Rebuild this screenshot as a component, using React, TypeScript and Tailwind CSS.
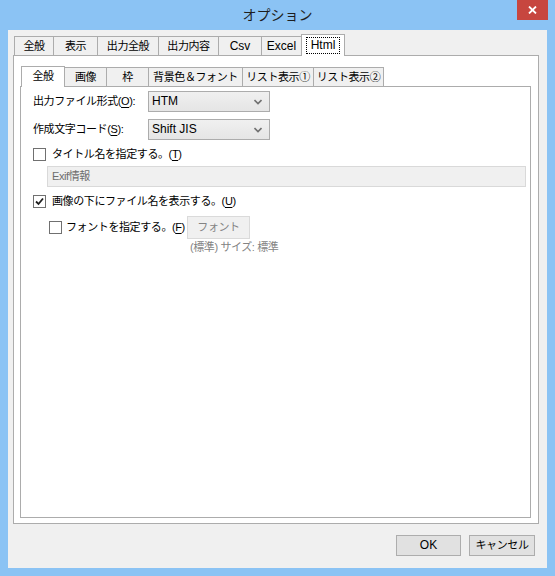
import React from 'react';

const FONT = "font-['Liberation_Sans','Noto_Sans_CJK_JP',sans-serif]";

const OUTER_TABS = [
  { label: '全般', w: 'w-[40px]', latin: false },
  { label: '表示', w: 'w-[45px]', latin: false },
  { label: '出力全般', w: 'w-[62px]', latin: false },
  { label: '出力内容', w: 'w-[61px]', latin: false },
  { label: 'Csv', w: 'w-[44px]', latin: true },
  { label: 'Excel', w: 'w-[41px]', latin: true },
];

const INNER_TABS = [
  { label: '画像', w: 'w-[43px]' },
  { label: '枠', w: 'w-[43px]' },
  { label: '背景色＆フォント', w: 'w-[95px]' },
  { label: 'リスト表示①', w: 'w-[72px]' },
  { label: 'リスト表示②', w: 'w-[71px]' },
];

const Chevron = () => (
  <svg width="8" height="6" viewBox="0 0 8 6" className="shrink-0">
    <path d="M0.5 1 L4 4.5 L7.5 1" fill="none" stroke="#707070" strokeWidth="1.6" />
  </svg>
);

const Select = ({ value }: { value: string }) => (
  <div className="w-[122px] h-[21px] border border-[#acacac] bg-gradient-to-b from-[#f0f0f0] to-[#e5e5e5] flex items-center justify-between pl-[3px] pr-[7px] text-black">
    <span className="text-[12px] tracking-normal">{value}</span>
    <Chevron />
  </div>
);

const Checkbox = ({ checked = false }: { checked?: boolean }) => (
  <div className="w-[13px] h-[13px] border border-[#707070] bg-white flex items-center justify-center shrink-0">
    {checked && (
      <svg width="9" height="9" viewBox="0 0 9 9">
        <path d="M1 4.5 L3.5 7 L8 1.5" fill="none" stroke="#1f1f1f" strokeWidth="1.8" />
      </svg>
    )}
  </div>
);

const Key = ({ k }: { k: string }) => (
  <>
    (<span className="underline underline-offset-[2px]">{k}</span>)
  </>
);

export default function App() {
  return (
    <div className={`w-[555px] h-[576px] bg-[#8bc3f4] flex flex-col text-[11px] leading-[15px] tracking-[-0.4px] font-normal text-black whitespace-nowrap ${FONT}`}>
      {/* title bar */}
      <div className="h-[30px] relative flex items-center justify-center shrink-0">
        <span className="text-[14px] tracking-normal text-[#1e1e1e] pt-[1px]">オプション</span>
        <div className="absolute right-[7px] top-0 w-[31px] h-[20px] bg-[#c7463f] flex items-center justify-center">
          <svg width="9" height="8" viewBox="0 0 9 8">
            <path d="M1 0.5 L8 7.5 M8 0.5 L1 7.5" stroke="white" strokeWidth="1.8" />
          </svg>
        </div>
      </div>

      {/* client area */}
      <div className="mx-[8px] mb-[8px] flex-1 bg-[#f0f0f0] flex flex-col pl-[5px] pt-[4px]">
        {/* outer tabs */}
        <div className="flex items-end h-[21px] pl-[1px]">
          {OUTER_TABS.map((t, i) => (
            <div
              key={t.label}
              className={`${t.w} h-[19px] border border-b-0 border-[#acacac] bg-[#f0f0f0] flex items-center justify-center ${i > 0 ? '-ml-px' : ''} ${t.latin ? 'text-[12px] tracking-normal' : ''}`}
            >
              {t.label}
            </div>
          ))}
          <div className="w-[44px] h-[22px] -ml-px -mb-px relative z-10 border border-b-0 border-[#acacac] bg-white flex items-start justify-center pt-[2px]">
            <span className="border border-dotted border-black px-[4px] leading-[15px] text-[12px] tracking-normal">Html</span>
          </div>
        </div>

        {/* outer panel */}
        <div className="w-[526px] h-[469px] border border-[#acacac] bg-white pl-[6px] pt-[9px]">
          {/* inner tabs */}
          <div className="flex items-end h-[21px] pl-[1px]">
            <div className="w-[44px] h-[21px] -mb-px relative z-10 border border-b-0 border-[#acacac] bg-white flex items-center justify-center pb-[1px]">
              全般
            </div>
            {INNER_TABS.map((t) => (
              <div
                key={t.label}
                className={`${t.w} h-[19px] -ml-px border border-b-0 border-[#acacac] bg-[#f0f0f0] flex items-center justify-center`}
              >
                {t.label}
              </div>
            ))}
          </div>

          {/* inner panel */}
          <div className="w-[511px] h-[432px] border border-[#acacac] bg-white flex flex-col pl-[12px] pt-[4px]">
            <div className="flex items-center h-[21px]">
              <span className="w-[115px]">
                出力ファイル形式<Key k="O" />:
              </span>
              <Select value="HTM" />
            </div>
            <div className="flex items-center h-[21px] mt-[7px]">
              <span className="w-[115px]">
                作成文字コード<Key k="S" />:
              </span>
              <Select value="Shift JIS" />
            </div>
            <div className="flex items-center gap-[6px] h-[17px] mt-[6px]">
              <Checkbox />
              <span>
                タイトル名を指定する。<Key k="T" />
              </span>
            </div>
            <div className="ml-[14px] mr-[4px] mt-[3px] h-[21px] border border-[#d9d9d9] bg-[#f0f0f0] flex items-center pl-[4px] text-[#6d6d6d]">
              Exif情報
            </div>
            <div className="flex items-center gap-[6px] h-[17px] mt-[6px]">
              <Checkbox checked />
              <span>
                画像の下にファイル名を表示する。<Key k="U" />
              </span>
            </div>
            <div className="flex items-center h-[23px] mt-[6px] pl-[16px]">
              <Checkbox />
              <span className="ml-[4px] w-[121px]">
                フォントを指定する。<Key k="F" />
              </span>
              <div className="w-[63px] h-[23px] border border-[#dadada] bg-[#f0f0f0] flex items-center justify-center text-[#838383]">
                フォント
              </div>
            </div>
            <div className="pl-[157px] mt-[1px] text-[#838383] h-[16px]">(標準) サイズ: 標準</div>
          </div>
        </div>

        {/* buttons */}
        <div className="flex justify-end gap-[8px] pr-[12px] mt-[11px]">
          <div className="w-[65px] h-[21px] border border-[#adadad] bg-[#e1e1e1] flex items-center justify-center text-[12px] tracking-normal">OK</div>
          <div className="w-[66px] h-[21px] border border-[#adadad] bg-[#e1e1e1] flex items-center justify-center">キャンセル</div>
        </div>
      </div>
    </div>
  );
}
